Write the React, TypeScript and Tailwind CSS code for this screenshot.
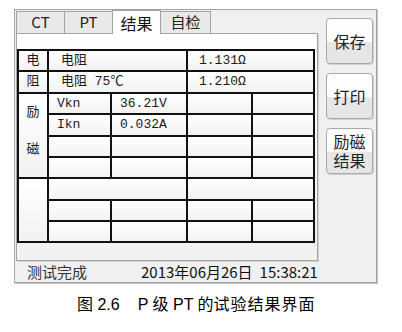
import React from "react";

const ui = { fontFamily: '"Noto Sans CJK SC", "Noto Sans", sans-serif' };
const cellFont = { fontFamily: '"Liberation Mono", "Noto Sans CJK SC", monospace' };

const cell = "bg-gradient-to-b from-white to-[#f2f2f2] flex items-center text-[13px] text-[#1a1a1a]";

const tabs = [
  { label: "CT", w: "w-[48px]", active: false },
  { label: "PT", w: "w-[48px]", active: false },
  { label: "结果", w: "w-[49px]", active: true },
  { label: "自检", w: "w-[50px]", active: false },
];

const buttons = [["保存"], ["打印"], ["励磁", "结果"]];

const App = () => {
  return (
    <div className="w-[402px] h-[332px] bg-white overflow-hidden" style={ui}>
      <div className="pt-[9px] pl-[14px]">
        <div className="w-[363px] h-[274px] border border-[#a3a3a3] bg-[#f0f0f0] shadow-[1px_1px_0_#c4c4c4] flex">
          {/* left side: tabs, panel, status */}
          <div className="w-[303px] pl-px flex flex-col">
            <div className="flex h-[23px] items-start">
              {tabs.map((t, i) =>
                t.active ? (
                  <div
                    key={t.label}
                    className={`${t.w} h-[24px] -mb-px relative z-10 bg-white border-t border-x border-[#a3a3a3] flex items-center justify-center text-[16px] text-[#111]`}
                  >
                    {t.label}
                  </div>
                ) : (
                  <div
                    key={t.label}
                    className={`${t.w} h-[22px] mt-px bg-[#e9e9e9] border-t border-[#a3a3a3] ${
                      i === 0 || i === 1 ? "border-l" : ""
                    } ${i === tabs.length - 1 ? "border-r" : ""} flex items-center justify-center text-[15px] text-[#222]`}
                  >
                    {t.label}
                  </div>
                )
              )}
            </div>
            <div className="w-[302px] h-[228px] border border-[#a3a3a3] shadow-[1px_1px_0_#d2d2d2] bg-gradient-to-b from-white to-[#f1f1f1] pt-[15px]">
              <div
                className="w-[298px] grid grid-cols-[28px_61px_74px_63px_60px] grid-rows-[19px_20px_19px_20px_19px_19px_20px_19px_19px] gap-[2px] p-[2px] bg-[#111]"
                style={cellFont}
              >
                {/* 电阻 block */}
                <div className={`${cell} justify-center`}>电</div>
                <div className={`${cell} col-span-2 pl-[12px]`}>电阻</div>
                <div className={`${cell} col-span-2 pl-[11px]`}>1.131Ω</div>
                <div className={`${cell} justify-center`}>阻</div>
                <div className={`${cell} col-span-2 pl-[12px]`}>电阻 75℃</div>
                <div className={`${cell} col-span-2 pl-[11px]`}>1.210Ω</div>

                {/* 励磁 block */}
                <div className={`${cell} row-span-4 flex-col !items-center !justify-start pt-[12px] gap-[23px] leading-[14px]`}>
                  <span>励</span>
                  <span>磁</span>
                </div>
                <div className={`${cell} pl-[8px]`}>Vkn</div>
                <div className={`${cell} pl-[8px]`}>36.21V</div>
                <div className={cell}></div>
                <div className={cell}></div>
                <div className={`${cell} pl-[8px]`}>Ikn</div>
                <div className={`${cell} pl-[8px]`}>0.032A</div>
                <div className={cell}></div>
                <div className={cell}></div>
                <div className={cell}></div>
                <div className={cell}></div>
                <div className={cell}></div>
                <div className={cell}></div>
                <div className={cell}></div>
                <div className={cell}></div>
                <div className={cell}></div>
                <div className={cell}></div>

                {/* empty block */}
                <div className={`${cell} row-span-3`}></div>
                <div className={`${cell} col-span-2`}></div>
                <div className={`${cell} col-span-2`}></div>
                <div className={cell}></div>
                <div className={cell}></div>
                <div className={cell}></div>
                <div className={cell}></div>
                <div className={cell}></div>
                <div className={cell}></div>
                <div className={cell}></div>
                <div className={cell}></div>
              </div>
            </div>
            <div className="h-[21px] flex items-center text-[15px] leading-[20px]">
              <span className="pl-[11px] w-[125px] text-[#333]">测试完成</span>
              <span className="text-[#111]">
                2013年06月26日<span className="ml-[7px]">15:38:21</span>
              </span>
            </div>
          </div>

          {/* right side buttons */}
          <div className="ml-[8px] pt-[8px] flex flex-col gap-[9px]">
            {buttons.map((b) => (
              <div
                key={b.join("")}
                className="w-[47px] h-[46px] rounded-[4px] border border-[#a8a8a8] shadow-[1px_1px_0_#d0d0d0] bg-[linear-gradient(to_bottom,#fefefe_52%,#e6e6e6_52%)] flex flex-col items-center justify-center text-[16px] text-[#222]"
              >
                {b.map((line) => (
                  <span key={line} className="block h-[19px] leading-[19px]">
                    {line}
                  </span>
                ))}
              </div>
            ))}
          </div>
        </div>
      </div>

      <div
        className="mt-[12px] pl-[77px] text-[16px] leading-[20px] text-black whitespace-pre flex"
        style={{ fontFamily: '"Liberation Sans", "Noto Sans CJK SC", sans-serif' }}
      >
        <span>图 2.6</span>
        <span className="ml-[18px]">P 级 PT 的</span>
        <span className="tracking-[1px]">试验结果界面</span>
      </div>
    </div>
  );
};

export default App;
